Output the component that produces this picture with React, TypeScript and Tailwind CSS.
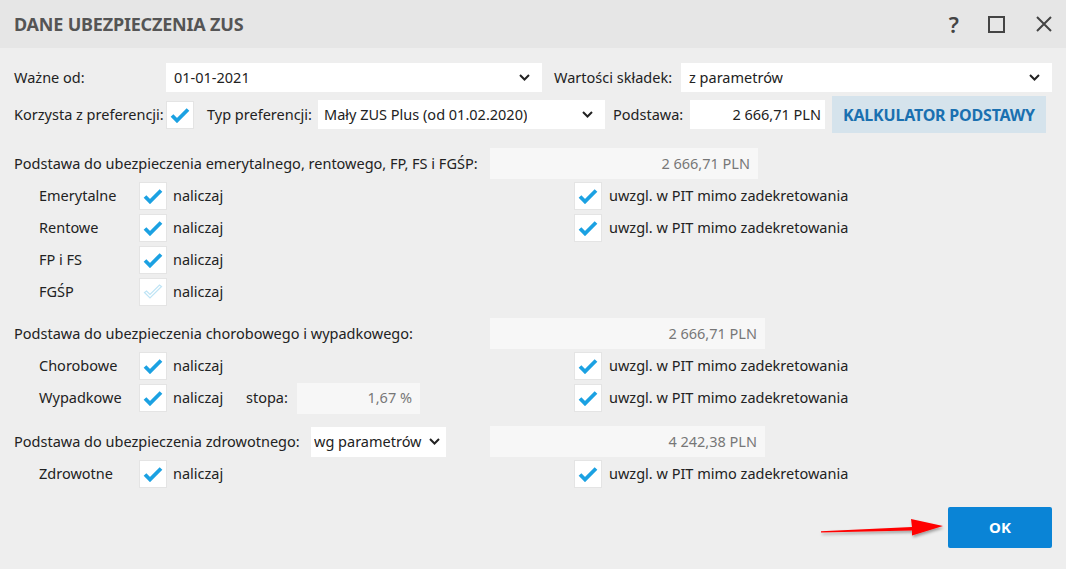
import React from "react";

const FONT = { fontFamily: '"Noto Sans", "Open Sans", sans-serif' };

function Chevron() {
  return (
    <svg width="11" height="7" viewBox="0 0 11 7" className="shrink-0">
      <path d="M1 1l4.5 4.5L10 1" fill="none" stroke="#222" strokeWidth="2" />
    </svg>
  );
}

function Select({ value, className }: { value: string; className: string }) {
  return (
    <div className={`flex shrink-0 items-center justify-between bg-white pl-2 pr-3 ${className}`}>
      <span className="truncate">{value}</span>
      <Chevron />
    </div>
  );
}

function Check({ on = true, disabled = false }: { on?: boolean; disabled?: boolean }) {
  return (
    <div className="flex h-[28px] w-[28px] shrink-0 items-center justify-center border border-[#e4e4e4] bg-white">
      {on && !disabled && (
        <svg width="20" height="16" viewBox="0 0 20 16">
          <path d="M2 8.5l5 5L18 2.5" fill="none" stroke="#1ba1e2" strokeWidth="3.8" strokeLinejoin="miter" />
        </svg>
      )}
      {disabled && (
        <svg width="20" height="16" viewBox="0 0 20 16">
          <path d="M1.5 8.5l5.5 5.5L18.5 2.5l-2-1.5L7 10.5 3.5 7z" fill="none" stroke="#bfe4f5" strokeWidth="1.2" />
        </svg>
      )}
    </div>
  );
}

function ReadBox({ value, className }: { value: string; className: string }) {
  return (
    <div className={`flex h-[31px] shrink-0 items-center justify-end bg-[#f7f7f7] pr-2 text-[#777] ${className}`}>
      {value}
    </div>
  );
}

function Row({
  label,
  pit = true,
  disabled = false,
  extra,
}: {
  label: string;
  pit?: boolean;
  disabled?: boolean;
  extra?: React.ReactNode;
}) {
  return (
    <div className="flex h-[28px] items-center whitespace-nowrap">
      <span className="w-[125px] shrink-0 pl-[25px]">{label}</span>
      <Check disabled={disabled} />
      <span className="ml-[6px] w-[73px] shrink-0">naliczaj</span>
      <div className="flex w-[328px] shrink-0 items-center">{extra}</div>
      {pit && (
        <>
          <Check />
          <span className="ml-[7px]">uwzgl. w PIT mimo zadekretowania</span>
        </>
      )}
    </div>
  );
}

export default function App() {
  return (
    <div className="flex h-[569px] w-[1066px] flex-col overflow-hidden bg-[#eeeeee] text-[14.5px] text-[#222]" style={FONT}>
      {/* title bar */}
      <div className="flex h-[48px] shrink-0 items-center bg-[#e6e6e6] pl-[14px] pr-[14px]">
        <span className="whitespace-nowrap text-[18px] font-bold tracking-[-0.2px] text-[#555]">DANE UBEZPIECZENIA ZUS</span>
        <div className="ml-auto flex items-center">
          <span className="mr-[29px] text-[22px] font-semibold leading-none text-[#444]">?</span>
          <div className="mr-[31px] h-[17px] w-[17px] border-2 border-[#444]" />
          <svg width="16" height="16" viewBox="0 0 16 16">
            <path d="M1 1l14 14M15 1L1 15" stroke="#444" strokeWidth="2" />
          </svg>
        </div>
      </div>

      <div className="flex flex-1 flex-col whitespace-nowrap px-[14px] pt-[15px]">
        {/* row 1 */}
        <div className="flex h-[29px] items-center">
          <span className="w-[152px] shrink-0">Ważne od:</span>
          <Select value="01-01-2021" className="h-[29px] w-[376px]" />
          <span className="ml-[12px] w-[127px] shrink-0">Wartości składek:</span>
          <Select value="z parametrów" className="h-[29px] flex-1" />
        </div>

        {/* row 2 */}
        <div className="mt-[4px] flex h-[37px] items-center">
          <span className="w-[152px] shrink-0">Korzysta z preferencji:</span>
          <Check />
          <span className="ml-[13px] w-[111px] shrink-0">Typ preferencji:</span>
          <Select value="Mały ZUS Plus (od 01.02.2020)" className="h-[29px] w-[287px] pl-[6px]" />
          <span className="ml-[8px] w-[77px] shrink-0">Podstawa:</span>
          <div className="flex h-[29px] w-[135px] shrink-0 items-center justify-end bg-white pr-[4px]">2 666,71 PLN</div>
          <div className="ml-[7px] flex h-[37px] w-[214px] shrink-0 items-center justify-center bg-[#d5e3ec] text-[16px] font-bold tracking-[-0.2px] text-[#1a70b0]">
            KALKULATOR PODSTAWY
          </div>
        </div>

        {/* section 1 */}
        <div className="mt-[15px] flex h-[31px] items-center">
          <span className="w-[476px] shrink-0">Podstawa do ubezpieczenia emerytalnego, rentowego, FP, FS i FGŚP:</span>
          <ReadBox value="2 666,71 PLN" className="w-[268px]" />
        </div>
        <div className="mt-[3px] flex flex-col gap-[4px]">
          <Row label="Emerytalne" />
          <Row label="Rentowe" />
          <Row label="FP i FS" pit={false} />
          <Row label="FGŚP" pit={false} disabled />
        </div>

        {/* section 2 */}
        <div className="mt-[12px] flex h-[31px] items-center">
          <span className="w-[476px] shrink-0">Podstawa do ubezpieczenia chorobowego i wypadkowego:</span>
          <ReadBox value="2 666,71 PLN" className="w-[275px]" />
        </div>
        <div className="mt-[3px] flex flex-col gap-[4px]">
          <Row label="Chorobowe" />
          <Row
            label="Wypadkowe"
            extra={
              <>
                <span className="w-[51px] shrink-0">stopa:</span>
                <ReadBox value="1,67 %" className="w-[123px]" />
              </>
            }
          />
        </div>

        {/* section 3 */}
        <div className="mt-[14px] flex h-[31px] items-center">
          <span className="w-[297px] shrink-0">Podstawa do ubezpieczenia zdrowotnego:</span>
          <Select value="wg parametrów" className="h-[30px] w-[135px] pl-[3px] pr-[6px]" />
          <div className="w-[44px] shrink-0" />
          <ReadBox value="4 242,38 PLN" className="w-[275px]" />
        </div>
        <div className="mt-[3px] flex flex-col">
          <Row label="Zdrowotne" />
        </div>

        {/* footer */}
        <div className="mt-[19px] flex items-center justify-end">
          <svg width="128" height="24" viewBox="0 0 128 24" className="mr-[1px]">
            <defs>
              <filter id="sh" x="-10%" y="-50%" width="130%" height="250%">
                <feDropShadow dx="1" dy="2" stdDeviation="1.5" floodColor="#000" floodOpacity="0.35" />
              </filter>
            </defs>
            <path d="M2 16.5L2 15.2L93 11L92 3L124 10L93 19.5L93 14.5Z" fill="#ff0000" filter="url(#sh)" />
          </svg>
          <div className="flex h-[41px] w-[104px] items-center justify-center rounded-[2px] bg-[#0a84d6] text-[15px] font-bold text-white">
            OK
          </div>
        </div>
      </div>
    </div>
  );
}
